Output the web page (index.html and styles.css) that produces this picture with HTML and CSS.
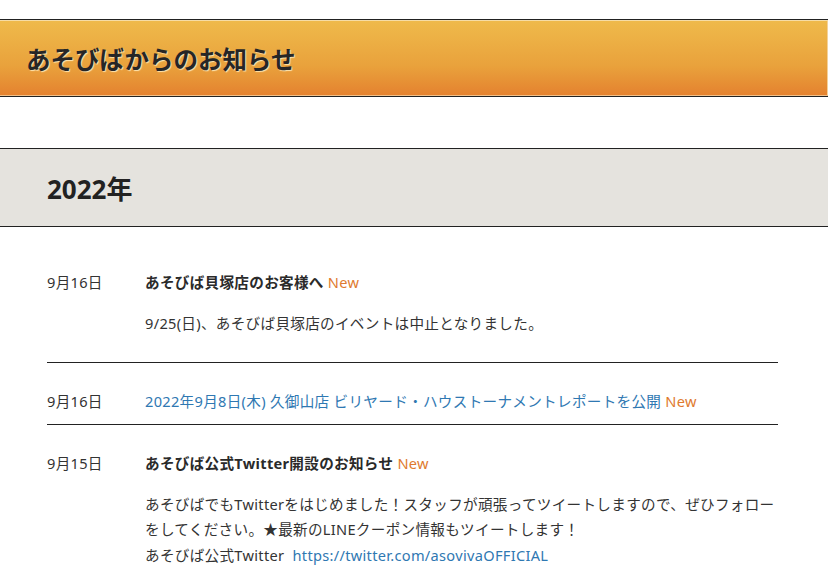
FILE: index.html
```html
<!DOCTYPE html>
<html lang="ja">
<head>
  <meta charset="UTF-8">
  <title>あそびばからのお知らせ</title>
  <link rel="stylesheet" href="styles.css">
</head>
<body>

  <header class="page-title">
    <h1>あそびばからのお知らせ</h1>
  </header>

  <section class="year">
    <h2>2022年</h2>
  </section>

  <!-- お知らせ一覧 -->
  <div class="news">
    <div class="item">
      <div class="date">9月16日</div>
      <div class="body">
        <p class="title">あそびば貝塚店のお客様へ <span class="new">New</span></p>
        <p class="text">9/25(日)、あそびば貝塚店のイベントは中止となりました。</p>
      </div>
    </div>

    <div class="item">
      <div class="date">9月16日</div>
      <div class="body">
        <p class="title link"><a href="#">2022年9月8日(木) 久御山店 ビリヤード・ハウストーナメントレポートを公開</a> <span class="new">New</span></p>
      </div>
    </div>

    <div class="item">
      <div class="date">9月15日</div>
      <div class="body">
        <p class="title">あそびば公式Twitter開設のお知らせ <span class="new">New</span></p>
        <p class="text">あそびばでもTwitterをはじめました！スタッフが頑張ってツイートしますので、ぜひフォローをしてください。★最新のLINEクーポン情報もツイートします！<br>あそびば公式Twitter&nbsp; <a href="#">https://twitter.com/asovivaOFFICIAL</a></p>
      </div>
    </div>
  </div>

</body>
</html>
```

FILE: styles.css
```css
body {
  margin: 0;
  padding-top: 19px;
  background: #fff;
  color: #333;
  font-family: "Noto Sans", "Noto Sans CJK JP", sans-serif;
}

a {
  color: #2f78b2;
  text-decoration: none;
}

.page-title {
  height: 76px;
  border-top: 1px solid #222;
  border-bottom: 1px solid #222;
  background: linear-gradient(#efba4b, #e9a23c 60%, #e4812f);
  box-shadow: inset 0 1px 0 #f6dca6, inset 0 -1px 0 #f0c08a, inset -1px 0 0 #f3d29a;
  display: flex;
  align-items: center;
}

.page-title h1 {
  margin: 0 0 0 26px;
  font-size: 24.5px;
  font-weight: bold;
  color: #262626;
  text-shadow: 1px 1px 1px rgba(255, 236, 190, 0.9);
}

.year {
  margin-top: 51px;
  height: 77px;
  border-top: 1px solid #222;
  border-bottom: 1px solid #222;
  background: #e5e3de;
  display: flex;
  align-items: center;
}

.year h2 {
  margin: 0 0 0 47px;
  font-size: 26px;
  font-weight: bold;
  color: #222;
}

.news {
  margin: 17px 50px 0 47px;
  font-size: 14.6px;
  line-height: 25px;
  letter-spacing: 0.3px;
}

.item {
  display: grid;
  grid-template-columns: 98px 1fr;
  padding: 26px 0 10px;
  border-bottom: 1px solid #222;
}

.item p {
  margin: 0;
}

.title {
  font-weight: bold;
  color: #2a2a2a;
}

.title.link {
  font-weight: normal;
}

.new {
  font-weight: normal;
  color: #e07a2e;
}

.text {
  margin-top: 16px !important;
  margin-bottom: 15px !important;
  line-height: 25.5px;
}
```
